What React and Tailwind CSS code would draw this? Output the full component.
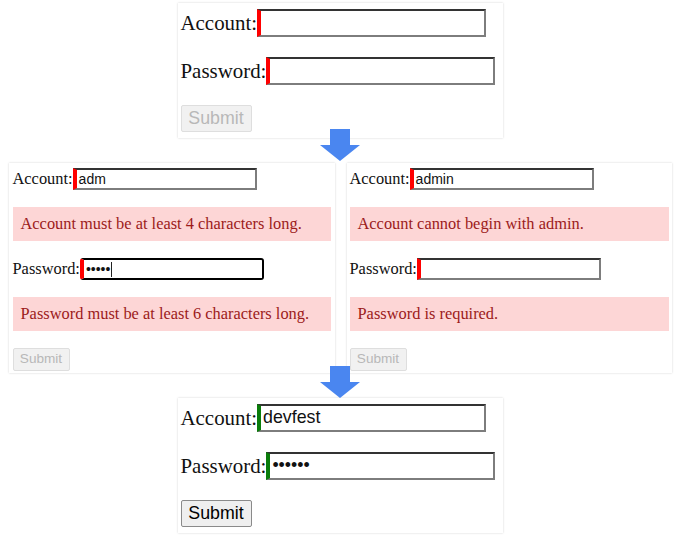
const serif = "font-['Liberation_Serif','Times_New_Roman',serif]";
const sans = "font-['Liberation_Sans',Arial,sans-serif]";

function Arrow({ className }) {
  return (
    <svg width="40" height="32" viewBox="0 0 40 32" className={className}>
      <path d="M10 0h20v16h10L20 32 0 16h10z" fill="#4a86f0" />
    </svg>
  );
}

function Field({ label, value, big, state, focused, password }) {
  const mark = state === 'ok' ? 'border-l-[#0a7d0a]' : 'border-l-[#ff0000]';
  const frame = focused
    ? 'border-2 border-black rounded-[3px]'
    : 'border-2 border-t-[#333] border-r-[#7d7d7d] border-b-[#7d7d7d]';
  const text = password ? '•'.repeat(value.length) : value;
  return (
    <div className={`flex items-center ${big ? 'h-[28px]' : 'h-[22px]'}`}>
      <span className={`${serif} text-[#111] ${big ? 'text-[20.9px]' : 'text-[16.4px]'} leading-none`}>
        {label}
      </span>
      <div
        className={`${sans} ${frame} border-l-4 ${mark} flex items-center pl-[2px] bg-white text-[#111] ${
          big ? 'w-[229px] h-[28px] text-[17.8px]' : 'w-[184px] h-[22px] text-[14px]'
        }`}
      >
        <span className="leading-none">{text}</span>
        {focused && <span className="ml-[1px] w-px h-[15px] bg-[#222]" />}
      </div>
    </div>
  );
}

function ErrorBox({ children }) {
  return (
    <div className={`${serif} h-[34px] flex items-center px-[8px] bg-[#fdd6d6] text-[#9c1b1b] text-[16.4px]`}>
      {children}
    </div>
  );
}

function SubmitButton({ big, disabled }) {
  const look = disabled
    ? 'bg-[#f1f1f1] border-[#dedede] text-[#b8b8b8]'
    : 'bg-[#efefef] border-[#8a8a8a] text-black';
  return (
    <div
      className={`${sans} ${look} border rounded-[2px] flex items-center justify-center ${
        big ? 'w-[71px] h-[27px] text-[17.8px]' : 'w-[57px] h-[23px] text-[13.6px]'
      }`}
    >
      Submit
    </div>
  );
}

function BigPanel({ state, account, password, className }) {
  return (
    <div className={`w-[325px] bg-white shadow-[0_0_2px_rgba(0,0,0,0.18)] flex flex-col gap-[20px] pt-[6px] pb-[6px] px-[3px] ${className}`}>
      <Field big label="Account:" value={account} state={state} />
      <Field big label="Password:" value={password} state={state} password />
      <SubmitButton big disabled={state !== 'ok'} />
    </div>
  );
}

function SmallPanel({ account, accountError, password, passwordError, focused, width, pad }) {
  return (
    <div className={`${width} ${pad} bg-white shadow-[0_0_2px_rgba(0,0,0,0.18)] flex flex-col gap-[17px] pt-[5px] pb-[2px]`}>
      <Field label="Account:" value={account} />
      <ErrorBox>{accountError}</ErrorBox>
      <Field label="Password:" value={password} password focused={focused} />
      <ErrorBox>{passwordError}</ErrorBox>
      <SubmitButton disabled />
    </div>
  );
}

export default function App() {
  return (
    <div className="w-[680px] h-[542px] bg-white flex flex-col items-center overflow-hidden">
      <BigPanel state="empty" account="" password="" className="mt-[3px]" />
      <Arrow className="-mt-[9px] relative z-10" />
      <div className="mt-[2px] flex gap-[12px]">
        <SmallPanel
          width="w-[326px]"
          pad="px-[4px]"
          account="adm"
          accountError="Account must be at least 4 characters long."
          password="abcde"
          passwordError="Password must be at least 6 characters long."
          focused
        />
        <SmallPanel
          width="w-[325px]"
          pad="px-[3px]"
          account="admin"
          accountError="Account cannot begin with admin."
          password=""
          passwordError="Password is required."
        />
      </div>
      <Arrow className="-mt-[7px] relative z-10" />
      <BigPanel state="ok" account="devfest" password="secret" />
    </div>
  );
}
